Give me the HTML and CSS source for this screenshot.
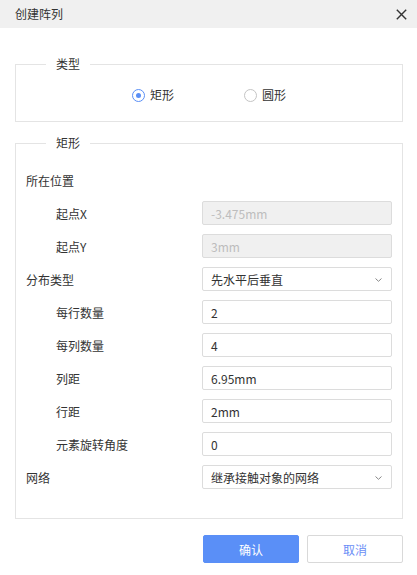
FILE: index.html
```html
<!DOCTYPE html>
<html lang="zh-CN">
<head>
<meta charset="utf-8">
<title>创建阵列</title>
<link rel="stylesheet" href="styles.css">
</head>
<body>
<div class="dialog">
  <header class="dialog-header">
    <span class="dialog-title">创建阵列</span>
    <button class="close-btn" aria-label="关闭">
      <svg width="11" height="11" viewBox="0 0 11 11"><path d="M0.8 0.8 L10.2 10.2 M10.2 0.8 L0.8 10.2" stroke="#333" stroke-width="1.4" fill="none"/></svg>
    </button>
  </header>
  <div class="dialog-body">
    <fieldset class="group group-type">
      <legend class="group-legend">类型</legend>
      <div class="radio-row">
        <label class="radio checked"><span class="radio-circle"></span><span class="radio-text">矩形</span></label>
        <label class="radio"><span class="radio-circle"></span><span class="radio-text">圆形</span></label>
      </div>
    </fieldset>
    <fieldset class="group group-rect">
      <legend class="group-legend">矩形</legend>
      <div class="form-grid">
        <div class="label">所在位置</div><div></div>
        <div class="label sub">起点X</div><div class="input disabled">-3.475mm</div>
        <div class="label sub">起点Y</div><div class="input disabled">3mm</div>
        <div class="label">分布类型</div><div class="input select">先水平后垂直<svg class="chev" width="7" height="4" viewBox="0 0 7 4"><path d="M0.5 0.5 L3.5 3.3 L6.5 0.5" stroke="#888" stroke-width="1" fill="none"/></svg></div>
        <div class="label sub">每行数量</div><div class="input">2</div>
        <div class="label sub">每列数量</div><div class="input">4</div>
        <div class="label sub">列距</div><div class="input">6.95mm</div>
        <div class="label sub">行距</div><div class="input">2mm</div>
        <div class="label sub">元素旋转角度</div><div class="input">0</div>
        <div class="label">网络</div><div class="input select">继承接触对象的网络<svg class="chev" width="7" height="4" viewBox="0 0 7 4"><path d="M0.5 0.5 L3.5 3.3 L6.5 0.5" stroke="#888" stroke-width="1" fill="none"/></svg></div>
      </div>
    </fieldset>
    <div class="actions">
      <button class="btn btn-primary">确认</button>
      <button class="btn btn-default">取消</button>
    </div>
  </div>
</div>
</body>
</html>
```
FILE: styles.css
```css
* { box-sizing: border-box; }
html, body { margin: 0; padding: 0; background: #fff; }
body {
  font-family: "Noto Sans CJK SC", "Noto Sans", sans-serif;
  font-size: 12px;
  color: #333;
}
.dialog { width: 417px; height: 575px; background: #fff; }
.dialog-header {
  height: 28px;
  background: #f0f0f0;
  display: flex;
  align-items: center;
  justify-content: space-between;
  padding: 0 10px 0 15px;
}
.dialog-title { font-size: 12px; color: #333; line-height: 16px; }
.close-btn {
  border: 0; background: transparent; padding: 0;
  width: 11px; height: 11px; display: flex;
}
.dialog-body { padding: 0 14px 0 15px; }
.group {
  margin: 0;
  border: 1px solid #e4e4e4;
  min-width: 0;
}
.group-legend {
  margin-left: 20px;
  padding: 0 10px;
  line-height: 16px;
  font-size: 12px;
  color: #333;
}
.group-type {
  margin-top: 28px;
  padding: 14px 10px 17px;
}
.radio-row {
  display: flex;
  justify-content: center;
  gap: 70px;
  height: 18px;
  align-items: center;
}
.radio { display: flex; align-items: center; gap: 5px; line-height: 16px; }
.radio-circle {
  width: 13px; height: 13px;
  border: 1px solid #c4c4c4;
  border-radius: 50%;
  display: flex; align-items: center; justify-content: center;
}
.radio.checked .radio-circle { border-color: #5a8ff6; }
.radio.checked .radio-circle::after {
  content: ""; width: 5px; height: 5px; border-radius: 50%; background: #5a8ff6;
}
.group-rect {
  margin-top: 13px;
  padding: 17px 10px 29px;
}
.form-grid {
  display: grid;
  grid-template-columns: 176px 1fr;
  grid-auto-rows: 24px;
  row-gap: 9px;
  align-items: center;
}
.label { line-height: 24px; padding-top: 2px; }
.label.sub { padding-left: 30px; }
.input {
  height: 24px;
  border: 1px solid #dcdcdc;
  border-radius: 2px;
  padding: 1px 8px 0;
  line-height: 21px;
  color: #333;
  background: #fff;
  display: flex; align-items: center; justify-content: space-between;
}
.input.disabled { background: #f0f0f0; color: #bdbdbd; }
.chev { margin-right: 1px; }
.actions {
  display: flex;
  justify-content: flex-end;
  gap: 8px;
  margin-top: 16px;
}
.btn {
  width: 96px; height: 28px;
  font-family: inherit; font-size: 12px;
  border-radius: 2px;
  padding: 0;
}
.btn-primary { background: #5a8ff7; color: #fff; border: 1px solid #5a8ff7; }
.btn-default { background: #fff; color: #6a8ef6; border: 1px solid #d9d9d9; }
```
